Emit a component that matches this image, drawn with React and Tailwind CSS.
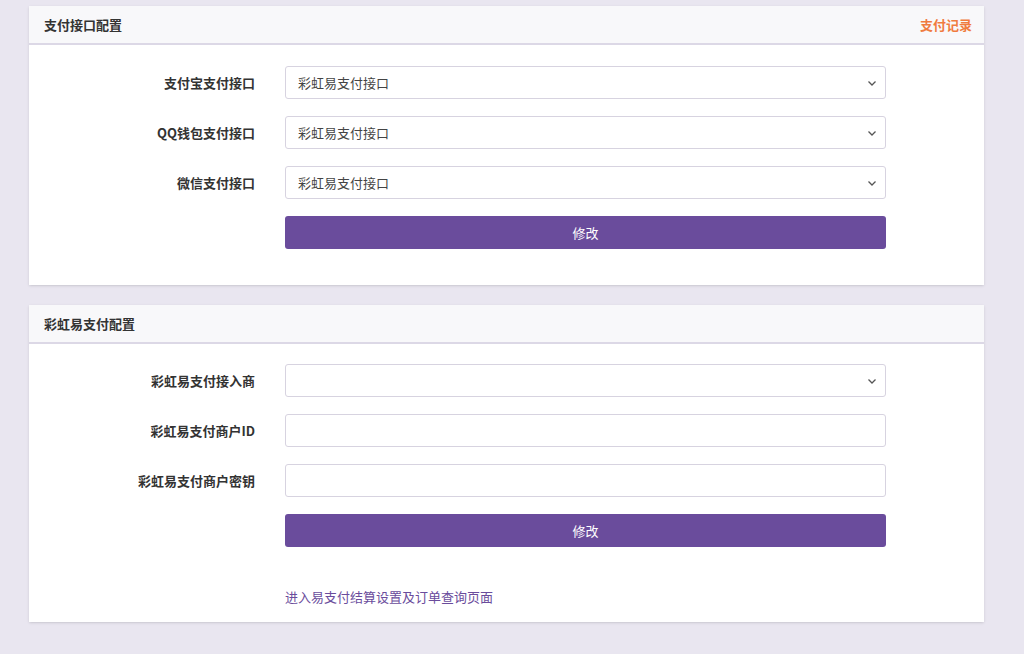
const F = { fontFamily: '"Noto Sans CJK SC", "Noto Sans", sans-serif' };

function Chevron() {
  return (
    <svg className="absolute right-[8px] top-1/2 -translate-y-1/2" width="10" height="10" viewBox="0 0 10 10" fill="none">
      <path d="M1.5 3.5 L5 7 L8.5 3.5" stroke="#555" strokeWidth="1.3" />
    </svg>
  );
}

function Row({ label, value, select }) {
  return (
    <div className="flex items-center h-[33px] mb-[17px]">
      <div className="w-[226px] text-right text-[13px] font-bold text-[#333] pr-0">{label}</div>
      <div className="ml-[30px] w-[601px] h-[33px] relative border border-[#d7d3e0] rounded-[3px] bg-white flex items-center px-[12px] text-[13px] text-[#444]">
        {value}
        {select && <Chevron />}
      </div>
    </div>
  );
}

function Btn() {
  return (
    <div className="flex">
      <div className="ml-[256px] w-[601px] h-[33px] bg-[#6a4c9c] rounded-[3px] text-white text-[13px] flex items-center justify-center">修改</div>
    </div>
  );
}

function Header({ title, right }) {
  return (
    <div className="h-[39px] bg-[#f8f8fa] border-b-2 border-[#dcd8e6] flex items-center justify-between px-[15px]">
      <span className="text-[13px] font-bold text-[#333]">{title}</span>
      {right && <span className="text-[13px] font-bold text-[#f07b3f] pr-[-3px] mr-[-3px]">{right}</span>}
    </div>
  );
}

export default function App() {
  return (
    <div style={F} className="w-[1024px] h-[654px] bg-[#e9e6f0] pt-[6px] overflow-hidden">
      <div className="ml-[29px] w-[955px] bg-white shadow-sm">
        <Header title="支付接口配置" right="支付记录" />
        <div className="pt-[21px] pb-[36px]">
          <Row label="支付宝支付接口" value="彩虹易支付接口" select />
          <Row label="QQ钱包支付接口" value="彩虹易支付接口" select />
          <Row label="微信支付接口" value="彩虹易支付接口" select />
          <Btn />
        </div>
      </div>
      <div className="ml-[29px] mt-[20px] w-[955px] bg-white shadow-sm">
        <Header title="彩虹易支付配置" />
        <div className="pt-[20px] pb-[15px]">
          <Row label="彩虹易支付接入商" value="" select />
          <Row label="彩虹易支付商户ID" value="" />
          <Row label="彩虹易支付商户密钥" value="" />
          <Btn />
          <div className="ml-[256px] mt-[40px] text-[13px] text-[#6a4c9c] leading-[20px]">进入易支付结算设置及订单查询页面</div>
        </div>
      </div>
    </div>
  );
}
